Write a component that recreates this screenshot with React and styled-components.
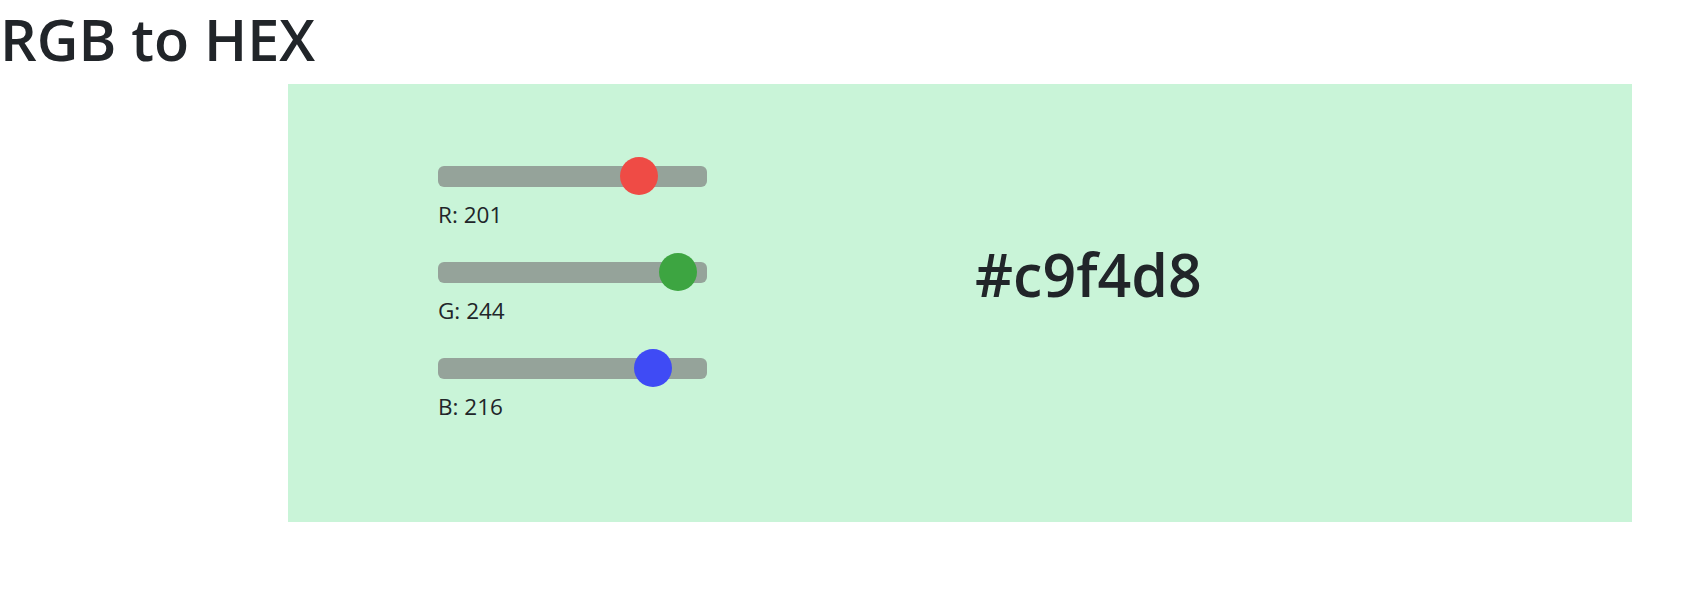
import React, { useState } from "react";
import styled, { createGlobalStyle } from "styled-components";

const Global = createGlobalStyle`
  html, body { margin: 0; padding: 0; background: #ffffff; }
  body { font-family: "Open Sans", "Noto Sans", sans-serif; color: #212529; }
`;

const Title = styled.h1`
  margin: 11px 0 0 0;
  font-size: 57.5px;
  line-height: 1;
  font-weight: 600;
  color: #212529;
`;

const Panel = styled.section`
  margin: 15.5px 0 0 288px;
  width: 1344px;
  height: 438px;
  box-sizing: border-box;
  padding: 73px 0 0 150px;
  display: flex;
  align-items: flex-start;
  gap: 268px;
`;

const Sliders = styled.div`
  display: flex;
  flex-direction: column;
  gap: 22px;
  width: 269px;
`;

const Row = styled.div`
  display: flex;
  flex-direction: column;
  gap: 3px;
`;

const Range = styled.input`
  -webkit-appearance: none;
  appearance: none;
  margin: 0;
  width: 269px;
  height: 38px;
  background: transparent;
  display: block;
  &::-webkit-slider-runnable-track {
    height: 21px;
    border-radius: 6px;
    background: #95a39a;
  }
  &::-webkit-slider-thumb {
    -webkit-appearance: none;
    appearance: none;
    width: 38px;
    height: 38px;
    border-radius: 50%;
    border: none;
    margin-top: -8.5px;
    background: ${(p) => p.$thumb};
  }
  &::-moz-range-track {
    height: 21px;
    border-radius: 6px;
    background: #95a39a;
  }
  &::-moz-range-thumb {
    width: 38px;
    height: 38px;
    border-radius: 50%;
    border: none;
    background: ${(p) => p.$thumb};
  }
`;

const Label = styled.div`
  font-size: 22.5px;
  line-height: 33px;
  color: #212529;
`;

const Hex = styled.div`
  margin-top: 82px;
  font-size: 59px;
  line-height: 1.2;
  font-weight: 600;
  color: #212529;
`;

const toHex = (n) => n.toString(16).padStart(2, "0");

export default function App() {
  const [r, setR] = useState(201);
  const [g, setG] = useState(244);
  const [b, setB] = useState(216);
  const hex = `#${toHex(r)}${toHex(g)}${toHex(b)}`;
  const channels = [
    { key: "R", value: r, set: setR, color: "#ef4b45" },
    { key: "G", value: g, set: setG, color: "#3da541" },
    { key: "B", value: b, set: setB, color: "#3f4bf5" },
  ];
  return (
    <>
      <Global />
      <Title>RGB to HEX</Title>
      <Panel style={{ background: hex }}>
        <Sliders>
          {channels.map((c) => (
            <Row key={c.key}>
              <Range
                type="range"
                min={0}
                max={255}
                value={c.value}
                $thumb={c.color}
                onChange={(e) => c.set(Number(e.target.value))}
              />
              <Label>
                {c.key}: {c.value}
              </Label>
            </Row>
          ))}
        </Sliders>
        <Hex>{hex}</Hex>
      </Panel>
    </>
  );
}
